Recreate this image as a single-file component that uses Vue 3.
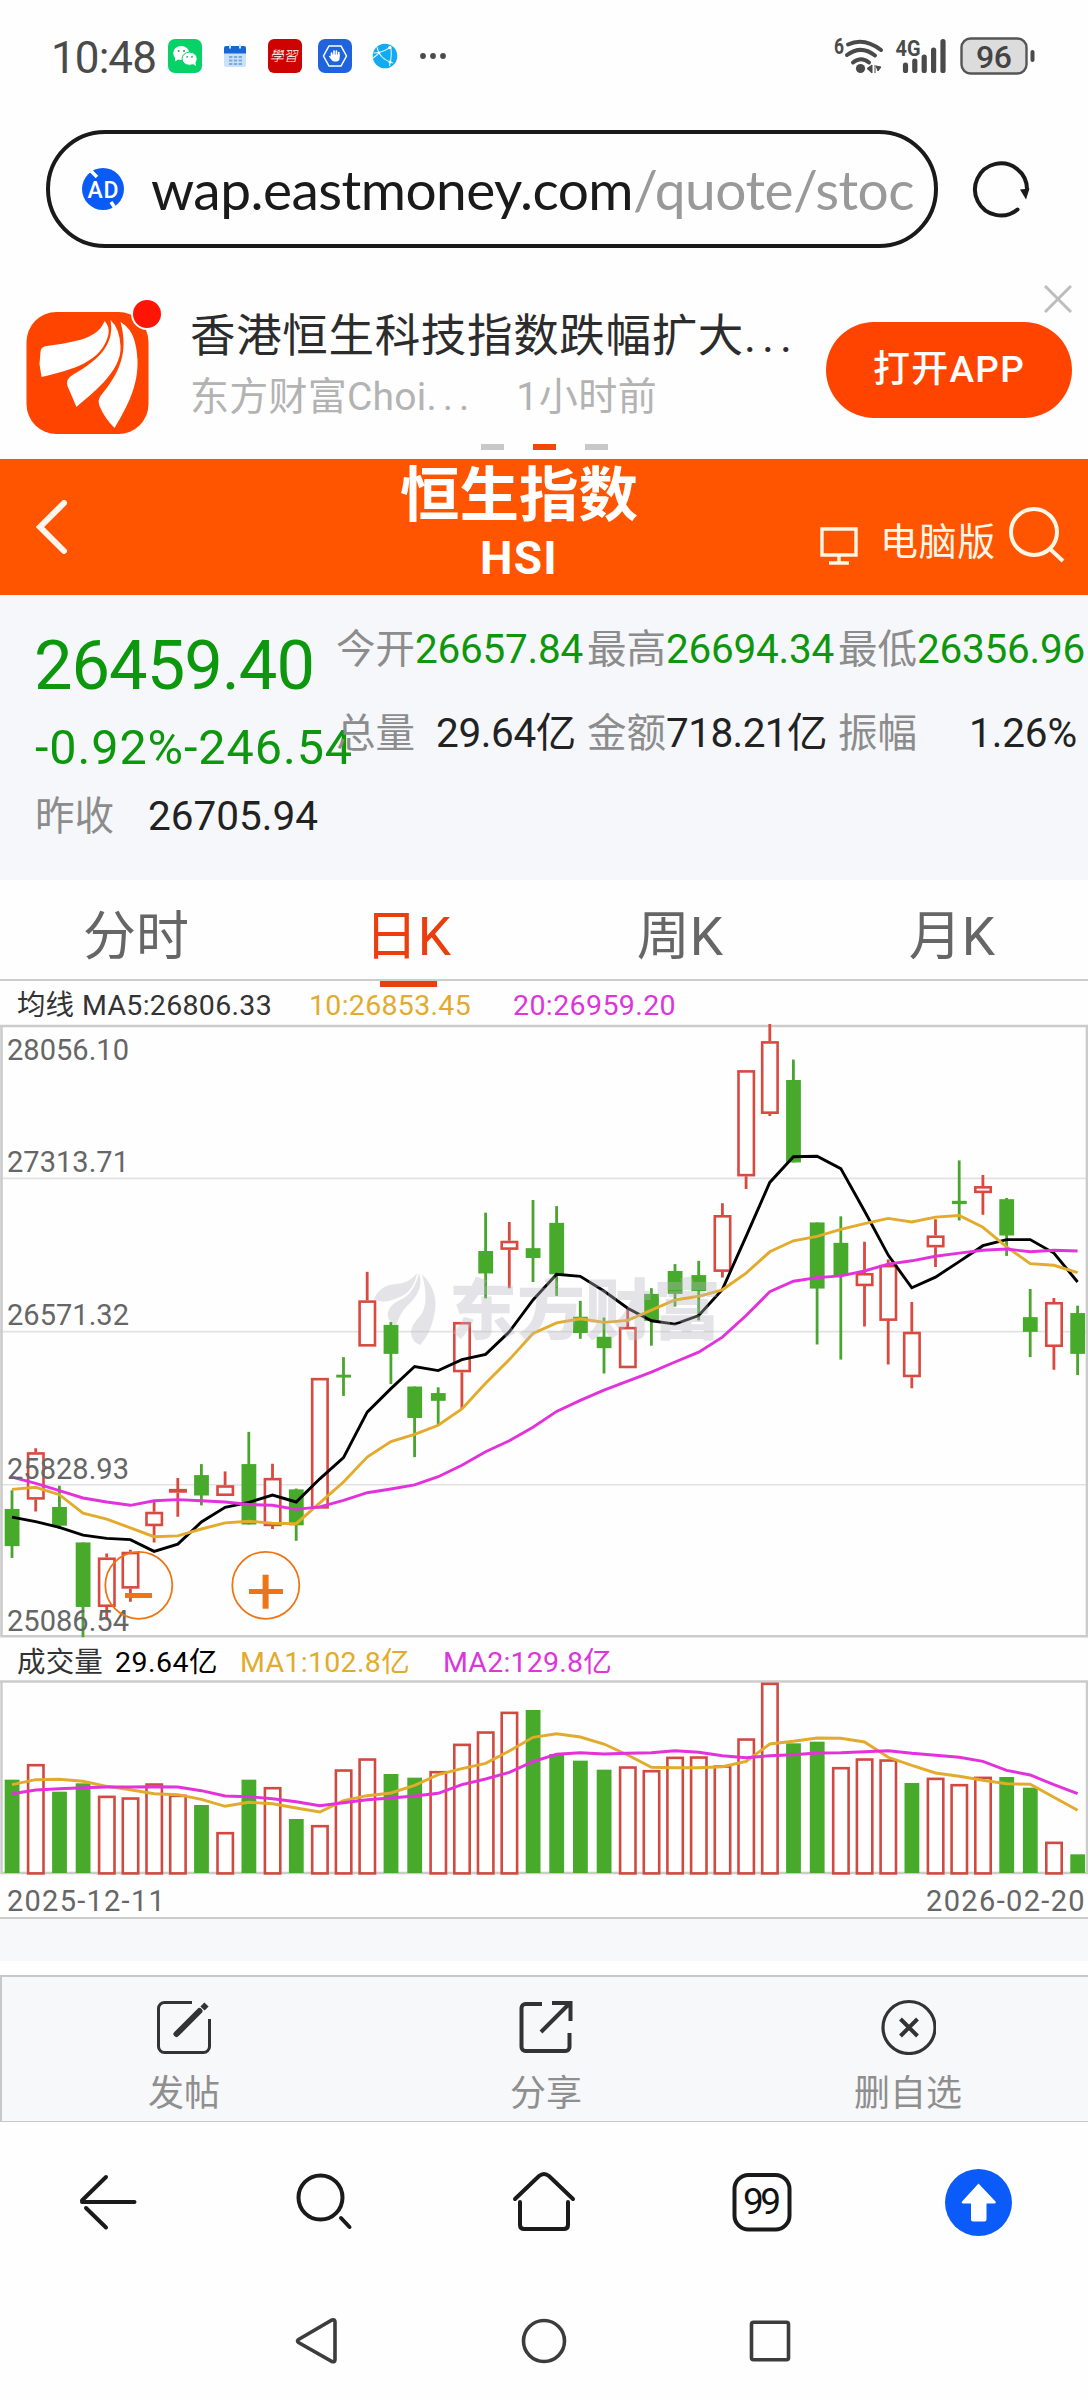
<template>
  <div class="page">
    <!-- 系统状态栏 -->
    <div class="status">
      <span v-fit="105" class="clock">10:48</span>
      <div class="status-apps">
        <svg class="app-ico" viewBox="0 0 34 34">
          <rect width="34" height="34" rx="7" fill="#07d268" />
          <ellipse cx="13.2" cy="14" rx="8" ry="7" fill="#fff" />
          <path d="M7 18l0 4.5 4-2.4z" fill="#fff" />
          <ellipse cx="21.6" cy="19.7" rx="7.6" ry="6.6" fill="#fff" stroke="#07d268" stroke-width="1" />
          <path d="M25 25l3 2-.6-4z" fill="#fff" />
          <g fill="#07b45c">
            <circle cx="10.6" cy="12" r="1" /><circle cx="16" cy="12" r="1" />
            <circle cx="19.2" cy="17.8" r=".9" /><circle cx="24" cy="17.8" r=".9" />
          </g>
        </svg>
        <svg class="app-ico" viewBox="0 0 34 34">
          <rect x="6" y="8" width="22" height="20" rx="2" fill="#c9e2fb" />
          <path d="M6 14.5V9a2 2 0 0 1 2-2h18a2 2 0 0 1 2 2v5.500z" fill="#1766d8" />
          <path d="M12 5.500v4M22 5.500v4" stroke="#cfe4fb" stroke-width="2" />
          <path d="M11 18h13M11 21.500h13M11 25h13" stroke="#7fa9dc" stroke-width="2.200" stroke-dasharray="3.400 1.400" />
        </svg>
        <svg class="app-ico" viewBox="0 0 34 34">
          <rect width="34" height="34" rx="6" fill="#cf0202" />
          <text class="xuexi" x="17" y="22.500" text-anchor="middle" transform="skewX(-10) translate(3 0)">學習</text>
        </svg>
        <svg class="app-ico" viewBox="0 0 34 34">
          <rect width="34" height="34" rx="7" fill="#2064dd" />
          <path d="M11 7h12l5.500 10L23 27H11L5.500 17z" fill="none" stroke="#fff" stroke-width="1.500" />
          <path d="M13.600 17v-3M16 17v-5M18.400 17v-5M20.800 17v-3.500" stroke="#fff" stroke-width="1.700" stroke-linecap="round" />
          <path d="M12.800 15.500h8.800v3.500q0 3.500-3.500 3.500h-1.600q-2 0-3.500-2.200l-2.200-3 1-.6 1 .8z" fill="#fff" />
        </svg>
        <svg class="app-ico" viewBox="0 0 34 34">
          <circle cx="17" cy="17" r="12.300" fill="#12aaf0" />
          <path d="M5.500 14q9 0 17-6M9 8q2 12 16 16M22.500 7q2 8-1 20M5 19q4-3 5-4" fill="none" stroke="#d6f2ff" stroke-width="1.100" />
          <circle cx="11" cy="14" r="1.300" fill="#fff" /><circle cx="21.800" cy="8.600" r="1.600" fill="#fff" />
          <circle cx="22" cy="23" r="1.500" fill="#fff" />
        </svg>
      </div>
      <svg class="more" viewBox="0 0 28 8">
        <g fill="#4a4a4a"><circle cx="4" cy="4" r="2.900" /><circle cx="14" cy="4" r="2.900" /><circle cx="24" cy="4" r="2.900" /></g>
      </svg>
      <svg class="signals" viewBox="832 34 206 44">
        <g fill="none" stroke="#4a4a4a" stroke-linecap="round">
          <path d="M847 44.500q16-7.500 33 5.500" stroke-width="4" />
          <path d="M846 55q14-10.500 28 .5" stroke-width="4" />
          <path d="M852 62.500q8-6.500 16 0" stroke-width="4" />
        </g>
        <circle cx="859.500" cy="68.500" r="4.600" fill="#4a4a4a" />
        <path d="M866 68.500l5-3.500v8zM874 65v8M875 66l5 1-3 4z" fill="#4a4a4a" stroke="#4a4a4a" />
        <text x="833" y="54" class="tiny" textLength="10" lengthAdjust="spacingAndGlyphs">6</text>
        <text x="894.500" y="55.500" class="tiny" textLength="25" lengthAdjust="spacingAndGlyphs">4G</text>
        <path
          d="M904.500 65v5.500M913.800 61v9.500M923.200 57v13.500M932.600 50v20.500M942 41.500v29"
          stroke="#4a4a4a" stroke-width="5.200" stroke-linecap="round"
        />
        <rect x="960.500" y="38.500" width="65" height="35" rx="9" fill="#dcdcdc" stroke="#555" stroke-width="2.400" />
        <rect x="1029.500" y="50" width="4" height="12" rx="2" fill="#4a4a4a" />
        <text x="993" y="68" class="battery" text-anchor="middle" textLength="36">96</text>
      </svg>
    </div>

    <!-- 浏览器地址栏 -->
    <div class="address">
      <div class="address-box">
        <svg class="ad" viewBox="0 0 42 42">
          <circle cx="21" cy="21" r="21" fill="#0a5bf5" />
          <path d="M9 3l6 6M29 34l4 6" stroke="#fff" stroke-width="3.500" />
          <text x="21" y="29.500" text-anchor="middle" textLength="31">AD</text>
        </svg>
        <span v-fit="763" class="url">wap.eastmoney.com<i>/quote/stoc</i></span>
      </div>
      <svg class="reload" viewBox="0 0 60 60">
        <path d="M46.500 50.500A26 26 0 1 1 56 30" fill="none" stroke="#1a1a1a" stroke-width="4" stroke-linecap="round" />
        <path d="M49 30.500L58.500 29.500 55 40.500z" fill="#1a1a1a" />
      </svg>
    </div>

    <!-- APP 推广条 -->
    <div class="promo">
      <div class="logo">
        <svg viewBox="0 0 122 122">
          <rect width="122" height="122" rx="30" fill="#ff4400" />
          <path v-for="d in feathers" :key="d" :d="d" fill="#fff" />
        </svg>
        <b class="badge"></b>
      </div>
      <div class="news">
        <p v-fit="610" class="news-title">香港恒生科技指数跌幅扩大<span class="ell">...</span></p>
        <p class="news-sub">
          <span v-fit="286">东方财富Choi<span class="ell">...</span></span>
          <span v-fit="141">1小时前</span>
        </p>
      </div>
      <div class="promo-side">
        <svg class="close" viewBox="0 0 28 28"><path d="M1 1l26 26M27 1L1 27" stroke="#bdbdbd" stroke-width="3" /></svg>
        <button class="open-app"><span v-fit="152">打开APP</span></button>
      </div>
      <div class="pager"><i></i><i class="on"></i><i></i></div>
    </div>

    <!-- 标题栏 -->
    <header class="title-bar">
      <svg class="back" viewBox="0 0 32 54"><path d="M28 3L4 27l24 24" /></svg>
      <div class="title">
        <h1>恒生指数</h1>
        <h2 v-fit="78">HSI</h2>
      </div>
      <div class="title-actions">
        <svg class="monitor" viewBox="0 0 38 38">
          <path d="M2 2h34v26H2zM19 28v7M9 36h20" fill="none" stroke="#fff6e8" stroke-width="3.400" />
        </svg>
        <span v-fit="116">电脑版</span>
        <svg class="find" viewBox="0 0 56 56">
          <circle cx="25" cy="25" r="23" /><path d="M41 42l13 12" />
        </svg>
      </div>
    </header>

    <!-- 行情摘要 -->
    <section class="quote">
      <div class="quote-main">
        <div class="price"><span v-fit="280">26459.40</span></div>
        <div class="change"><span v-fit="318">-0.92%-246.54</span></div>
        <div class="prev"><label>昨收</label><span v-fit="170">26705.94</span></div>
      </div>
      <div class="quote-grid">
        <div v-for="q in quotes" :key="q.label" class="cell" :class="{ end: !q.down }">
          <label>{{ q.label }}</label>
          <span v-fit="q.w" :class="{ down: q.down }">{{ q.value }}</span>
        </div>
      </div>
    </section>

    <nav class="tabs">
      <a v-for="t in tabs" :key="t" :class="{ active: t === current }" @click="current = t">{{ t }}</a>
    </nav>

    <!-- K 线 -->
    <div class="legend legend-ma">
      <span v-fit="57">均线</span>
      <span v-fit="190">MA5:26806.33</span>
      <span v-fit="162" class="y">10:26853.45</span>
      <span v-fit="163" class="m">20:26959.20</span>
    </div>
    <svg class="kline" viewBox="0 0 1088 620">
      <path d="M0 158.400H1088M0 311.600H1088M0 464.700H1088" stroke="#e2e2e2" stroke-width="1.600" />
      <path d="M0 6H1087V616.300H1.500V6" fill="none" stroke="#cbcbcb" stroke-width="2.600" />
      <g v-for="c in candles" :key="c.x">
        <template v-if="c.up">
          <path :d="`M${c.x} ${c.hi}V${c.top}M${c.x} ${c.bot}V${c.lo}`" stroke="#d9493f" stroke-width="2.800" />
          <rect :x="c.x - 7.600" :y="c.top + 1.200" width="15.400" :height="Math.max(c.bot - c.top - 2.400, 1)" fill="#fff" stroke="#d9493f" stroke-width="2.600" />
        </template>
        <template v-else>
          <path :d="`M${c.x} ${c.hi}V${c.lo}`" stroke="#4aa52f" stroke-width="2.800" />
          <rect :x="c.x - 7.300" :y="c.top" width="14.800" :height="c.bot - c.top" fill="#47aa2b" />
        </template>
      </g>
      <polyline :points="line(ma5, 2.45)" class="ln k" />
      <polyline :points="line(ma10, 2.45)" class="ln y" />
      <polyline :points="line(ma20, 2.45)" class="ln m" />
      <!-- 水印 -->
      <g class="mark">
        <path d="M374 279Q380 265 396 264Q410 263 417 253Q414 273 395 279Q382 284 374 279z" />
        <path d="M419 253Q425 270 407 286Q400 293 396 306Q389 302 388 297Q386 286 402 279Q414 273 419 253z" />
        <path d="M422 254Q440 272 434 296Q430 315 420 325Q412 322 411 313Q411 305 420 296Q430 284 422 254z" />
        <text x="449" y="314" textLength="272" lengthAdjust="spacingAndGlyphs">东方财富</text>
      </g>
      <text v-for="l in axis" :key="l.y" x="7" :y="l.y" class="axis" textLength="122">{{ l.t }}</text>
      <g class="zoom-btn">
        <circle cx="138.800" cy="565.300" r="33.500" />
        <path d="M125 575.500h27" stroke-width="5" />
        <circle cx="265.800" cy="565.300" r="33.500" />
        <path d="M249 571.500h34" stroke-width="5" />
        <path d="M265.600 554.700v34" stroke-width="6" />
      </g>
    </svg>

    <!-- 成交量 -->
    <div class="legend legend-vol">
      <span v-fit="86">成交量</span>
      <span v-fit="103" class="k">29.64亿</span>
      <span v-fit="170" class="y">MA1:102.8亿</span>
      <span v-fit="169" class="m">MA2:129.8亿</span>
    </div>
    <svg class="volume" viewBox="0 40 1088 196">
      <path d="M0 41.500H1087V233H1.500V41.500" fill="none" stroke="#cbcbcb" stroke-width="2.400" />
      <template v-for="v in volumes" :key="v.x">
        <rect v-if="v.down" :x="v.x - 7.300" :y="v.y" width="14.800" :height="233 - v.y" fill="#47aa2b" />
        <rect v-else :x="v.x - 7.600" :y="v.y + 1.200" width="15.400" :height="232.200 - v.y" fill="#fff" stroke="#d04a42" stroke-width="2.600" />
      </template>
      <polyline :points="line(vma1, 3)" class="ln y" />
      <polyline :points="line(vma2, 3)" class="ln m" />
    </svg>
    <div class="dates"><span v-fit="159">2025-12-11</span><span v-fit="160">2026-02-20</span></div>
    <div class="band"></div>

    <!-- 页面工具栏 -->
    <div class="tools">
      <div class="tool">
        <svg viewBox="0 0 56 56">
          <path d="M36 3.500H8.500a6 6 0 0 0-6 6v38a6 6 0 0 0 6 6h39a6 6 0 0 0 6-6V20" stroke-width="3" />
          <path d="M20.500 35L43.500 12" stroke-width="6" stroke-linecap="round" /><path d="M46.500 9.500l4-4" stroke-width="6" />
        </svg>
        <span>发帖</span>
      </div>
      <div class="tool">
        <svg viewBox="0 0 56 56">
          <path d="M24 5H7.500a4 4 0 0 0-4 4v39a4 4 0 0 0 4 4h40a4 4 0 0 0 4-4V34" stroke-width="4" />
          <path d="M23 33L51 5M34 4h18.500v18" stroke-width="4" />
        </svg>
        <span>分享</span>
      </div>
      <div class="tool">
        <svg viewBox="0 0 56 56">
          <circle cx="29" cy="28.500" r="26" stroke-width="3.200" />
          <path d="M20.500 20l17 17M37.500 20l-17 17" stroke-width="4" />
        </svg>
        <span>删自选</span>
      </div>
    </div>

    <!-- 浏览器底栏 -->
    <div class="browser">
      <svg viewBox="0 0 68 68"><path d="M7 34h52.500M7 32.500l24-23.500M11 40l20 19.500" /></svg>
      <svg viewBox="0 0 68 68"><circle cx="28.500" cy="29.500" r="22" /><path d="M49 50l8.500 9" /></svg>
      <svg viewBox="0 0 68 68">
        <path d="M5 31L29 8q5-4 10 0l24 23M10 34v23q0 4 4.500 4h39q4.500 0 4.500-4V34" />
      </svg>
      <svg viewBox="0 0 68 68">
        <rect x="6.500" y="7" width="55" height="54.500" rx="14" />
        <text x="34" y="46" text-anchor="middle" textLength="38">99</text>
      </svg>
      <svg viewBox="0 0 68 68" class="up">
        <circle cx="33.500" cy="34.500" r="33.500" />
        <path d="M33.500 15.500L50 33q2 2.500-1 2.500h-7.500v16q0 2-2 2H28q-2 0-2-2v-16h-7.500q-3 0-1-2.500z" />
      </svg>
    </div>

    <div class="sysnav">
      <svg viewBox="0 0 50 50"><path d="M5.500 23.500L39 4q3-1 3 2v37.500q0 3-3 2L5.500 26.500q-2-1.500 0-3z" /></svg>
      <svg viewBox="0 0 50 50"><circle cx="25" cy="25" r="20.500" /></svg>
      <svg viewBox="0 0 50 50"><rect x="6.500" y="6.300" width="37" height="37.500" rx="2" /></svg>
    </div>
  </div>
</template>

<script setup>
import { ref } from 'vue'

const vFit = {
  mounted(el, { value }) {
    const n = el.textContent.length
    const natural = el.getBoundingClientRect().width
    el.style.letterSpacing = `${((value - natural) / n).toFixed(3)}px`
  }
}

const feathers = [
  'M78 9C72 26 50 30 20 34Q14 35 14 40L13 52L15 65C45 58 76 50 82 22Q83 14 78 9Z',
  'M84 8C88 30 76 46 46 63Q39 67 41 74L50 95C62 84 96 60 94 34Q93 16 84 8Z',
  'M94 10C102 40 94 60 74 84Q71 88 73 94Q78 106 88 116C100 96 112 74 111 48C110 26 104 16 94 10Z'
]

const quotes = [
  { label: '今开', value: '26657.84', w: 168, down: true },
  { label: '最高', value: '26694.34', w: 168, down: true },
  { label: '最低', value: '26356.96', w: 168, down: true },
  { label: '总量', value: '29.64亿', w: 140 },
  { label: '金额', value: '718.21亿', w: 161 },
  { label: '振幅', value: '1.26%', w: 108 }
]

const tabs = ['分时', '日K', '周K', '月K']
const current = ref('日K')

const axis = [
  { y: 39.6, t: '28056.10' },
  { y: 152.2, t: '27313.71' },
  { y: 305.3, t: '26571.32' },
  { y: 458.8, t: '25828.93' },
  { y: 611.4, t: '25086.54' }
]

const px = i => +(12 + i * 23.68).toFixed(1)
const line = (list, k) => list.map((v, i) => `${px(i)},${(v / k).toFixed(1)}`).join(' ')

// [最高, 实体上沿, 实体下沿, 最低, 1 涨 / 0 跌]
const rows = [
  [1152, 1198, 1289, 1318, 0], [1049, 1059, 1175, 1204, 1], [1141, 1193, 1239, 1247, 0],
  [1280, 1280, 1438, 1512, 0], [1307, 1317, 1438, 1466, 1], [1298, 1303, 1393, 1425, 1],
  [1178, 1205, 1240, 1280, 1], [1122, 1149, 1158, 1217, 1], [1088, 1115, 1165, 1189, 0],
  [1106, 1140, 1166, 1166, 1], [1009, 1088, 1236, 1236, 0], [1087, 1122, 1240, 1247, 1],
  [1148, 1150, 1238, 1276, 0], [877, 877, 1197, 1197, 1], [826, 869, 876, 921, 0],
  [617, 687, 800, 800, 1], [740, 747, 818, 892, 0], [898, 898, 975, 1071, 0],
  [900, 914, 933, 992, 0], [740, 740, 863, 953, 1], [472, 566, 621, 682, 0],
  [495, 541, 563, 657, 1], [441, 559, 583, 642, 0], [456, 497, 623, 676, 0],
  [688, 727, 767, 781, 0], [729, 776, 804, 866, 0], [705, 752, 853, 853, 1],
  [657, 671, 737, 798, 0], [598, 615, 671, 702, 0], [590, 625, 664, 736, 0],
  [449, 478, 617, 631, 1], [123, 123, 383, 414, 1], [10, 52, 230, 235, 1],
  [97, 147, 349, 349, 0], [496, 496, 658, 795, 0], [481, 546, 626, 832, 0],
  [543, 620, 652, 751, 1], [587, 600, 737, 844, 1], [691, 764, 875, 902, 1],
  [488, 528, 557, 605, 1], [344, 443, 451, 491, 0], [380, 407, 424, 477, 1],
  [436, 439, 528, 578, 0], [659, 728, 764, 826, 0], [681, 691, 801, 857, 1],
  [700, 718, 818, 870, 0]
]
const candles = rows.map(([hi, top, bot, lo, up], i) => ({
  x: px(i), hi: hi / 2.45, top: top / 2.45, bot: bot / 2.45, lo: lo / 2.45, up
}))

const ma5 = [
  1218, 1229, 1243, 1262, 1270, 1273, 1302, 1284, 1230, 1194, 1182, 1164, 1181, 1124, 1072, 961,
  903, 849, 859, 832, 819, 764, 686, 623, 628, 664, 706, 737, 745, 724, 660, 530, 398, 335, 334,
  364, 468, 576, 656, 630, 592, 553, 538, 538, 571, 642
]
const ma10 = [
  1150, 1145, 1163, 1208, 1223, 1244, 1266, 1264, 1247, 1232, 1228, 1233, 1234, 1183, 1132, 1071,
  1033, 1015, 993, 953, 890, 832, 768, 742, 732, 741, 736, 711, 686, 677, 661, 620, 568, 541, 530,
  513, 499, 486, 495, 483, 479, 508, 556, 597, 601, 619
]
const ma20 = [
  1120, 1135, 1153, 1171, 1181, 1189, 1178, 1175, 1178, 1181, 1187, 1189, 1199, 1193, 1177, 1158,
  1149, 1139, 1119, 1091, 1058, 1031, 998, 959, 932, 907, 885, 863, 838, 814, 777, 724, 666, 640,
  631, 627, 615, 598, 590, 579, 571, 564, 561, 568, 564, 566
]

const volTops = [
  419, 372, 455, 430, 467, 472, 430, 464, 495, 576, 419, 441, 537, 555, 388, 355, 402, 413, 393,
  311, 274, 215, 210, 342, 362, 389, 379, 390, 350, 349, 376, 295, 128, 310, 305, 381, 355, 358,
  429, 413, 432, 410, 411, 443, 605, 643
]
const volDown = [0, 2, 3, 8, 10, 12, 16, 17, 22, 23, 24, 25, 33, 34, 38, 42, 43, 45]
const volumes = volTops.map((t, i) => ({ x: px(i), y: t / 3, down: volDown.includes(i) }))

const vma1 = [
  434, 419, 418, 424, 439, 449, 461, 464, 478, 499, 487, 491, 504, 516, 482, 467, 459, 436, 404,
  386, 370, 333, 292, 281, 291, 312, 345, 382, 383, 383, 380, 364, 312, 304, 294, 295, 306, 352,
  376, 399, 409, 421, 431, 433, 472, 511
]
const vma2 = [
  461, 450, 446, 443, 441, 441, 440, 441, 452, 468, 470, 476, 485, 497, 488, 479, 474, 468, 460,
  434, 417, 397, 365, 343, 338, 342, 340, 338, 332, 337, 347, 353, 347, 344, 339, 338, 335, 332,
  340, 346, 352, 364, 391, 405, 434, 461
]
</script>

<style>
body{ background:#fefefe; }
</style>

<style scoped>
.page{
  width:1088px; height:2400px; overflow:hidden;
  background:#fefefe; color:#222;
  font-family:Roboto, "Noto Sans CJK SC", sans-serif;
}
.page *{ box-sizing:border-box; }
svg{ display:block; flex:none; }
span, label{ white-space:nowrap; }
p, h1, h2{ margin:0; }

/* 状态栏 */
.status{
  display:flex; align-items:center;
  height:112px; padding-left:51px;
}
.clock{ font-size:44px; line-height:60px; color:#4a4a4a; margin-top:3px; }
.status-apps{ display:flex; gap:16px; margin-left:12px; }
.app-ico{ width:34px; height:34px; }
.xuexi{ font:300 14px "Noto Sans CJK TC", sans-serif; fill:#fff; }
.more{ width:28px; height:8px; margin-left:17px; }
.signals{ width:206px; height:44px; margin-left:386px; }
.tiny{ font:bold 22px Roboto, sans-serif; fill:#4a4a4a; }
.battery{ font:500 32px Roboto, sans-serif; fill:#444; }

/* 地址栏 */
.address{ display:flex; align-items:center; height:154px; padding-left:46px; }
.address-box{
  display:flex; align-items:center;
  width:892px; height:118px; padding-left:32px;
  border:4px solid #1a1a1a; border-radius:59px;
}
.ad{ width:42px; height:42px; }
.ad text{ font:500 23px Roboto, sans-serif; fill:#fff; }
.url{
  margin-left:27px; font:55px/70px Lato, sans-serif; color:#1a1a1a;
}
.url i{ font-style:normal; color:#999; }
.reload{ width:60px; height:60px; margin-left:33px; }

/* 推广条 */
.promo{
  display:grid; grid-template-columns:166px 634px 1fr; grid-template-rows:178px 15px;
  height:193px;
}
.logo{ position:relative; width:123px; height:122px; margin:46px 0 0 26px; }
.logo svg{ width:123px; height:122px; }
.badge{
  position:absolute; right:-14px; top:-14px;
  width:32px; height:32px; border-radius:50%;
  background:#ff1506; border:2px solid #fefefe;
}
.news{ padding:39px 0 0 24px; }
.news-title{ width:max-content; font-size:45.5px; line-height:63px; color:#2c2c2c; }
.news-sub{ display:flex; gap:41px; font-size:39px; line-height:58px; color:#b3b3b3; }
.ell{ letter-spacing:6px; }
.promo-side{ display:flex; flex-direction:column; align-items:flex-end; padding:19px 16px 0 0; }
.close{ width:28px; height:28px; }
.open-app{
  width:246px; height:96px; margin-top:9px; padding:0;
  border:0; border-radius:48px; background:#ff4400; color:#fff;
  font:500 37px/60px Roboto, "Noto Sans CJK SC", sans-serif;
}
.pager{ grid-column:1 / 4; display:flex; justify-content:center; gap:29px; }
.pager i{ width:23px; height:6px; background:#c8c8c8; }
.pager .on{ background:#f04806; }

/* 标题栏 */
.title-bar{
  display:grid; grid-template-columns:300px 438px 1fr;
  height:136px; background:#ff5500; color:#fff;
}
.back{ width:32px; height:54px; margin:41px 0 0 36px; fill:none; stroke:#fff6ee; stroke-width:6; stroke-linecap:round; }
.title{ text-align:center; }
.title h1{ font-size:59.5px; line-height:75px; font-weight:bold; }
.title h2{ width:max-content; margin:-1px auto 0; font:bold 46px/50px Roboto, sans-serif; }
.title-actions{ display:flex; padding-left:82px; font-size:38px; color:#fff6e8; }
.monitor{ width:38px; height:38px; margin-top:68px; }
.title-actions span{ margin:52px 0 0 22px; line-height:62px; height:62px; }
.find{ width:56px; height:56px; margin:48px 0 0 13px; fill:none; stroke:#fff6e8; stroke-width:4; }

/* 行情 */
.quote{ display:flex; height:285px; background:#f5f7fa; }
.quote label{ color:#8c8c8c; flex:none; }
.quote-main{ flex:none; width:336px; padding:26px 0 0 37px; color:#0d970d; white-space:nowrap; }
.price{ font-size:68.6px; line-height:90px; margin-left:-3px; }
.change{ font-size:48.5px; line-height:73px; margin-left:-2px; }
.prev{ font-size:40.5px; line-height:65px; display:flex; }
.prev label{ width:113px; margin-left:-2px; font-size:39.5px; }
.prev span{ color:#222; }
.quote-grid{
  display:grid; grid-template-columns:251px 251px 250px; grid-template-rows:83.5px 83.5px;
  padding-top:13px; flex:none;
}
.cell{ display:flex; font-size:40.5px; line-height:83.5px; }
.cell label{ width:79px; font-size:39.5px; }
.cell.end{ justify-content:space-between; padding-right:11px; }
.down{ color:#0d970d; }

/* 周期切换 */
.tabs{
  display:grid; grid-template-columns:repeat(4, 1fr);
  height:101px; border-bottom:2px solid #ccc;
  font-size:53px; line-height:114px; color:#666; text-align:center;
}
.tabs a{ position:relative; }
.tabs .active{ color:#ea3e0d; }
.tabs .active::after{
  content:""; position:absolute; left:108px; top:101px;
  width:57px; height:6px; background:#ea3e0d;
}

.legend{ display:flex; align-items:center; padding-left:17px; font-size:28.5px; line-height:28px; color:#333; }
.legend-ma{ height:39px; padding-top:11px; }
.legend-ma span:nth-child(2){ margin-left:8px; }
.legend-ma span:nth-child(3){ margin-left:37px; }
.legend-ma span:nth-child(4){ margin-left:42px; }
.legend-vol{ height:40px; padding-top:5px; }
.legend-vol span:nth-child(2){ margin-left:12px; }
.legend-vol span:nth-child(3){ margin-left:22px; }
.legend-vol span:nth-child(4){ margin-left:33px; }
.legend .k{ color:#000; }
.legend .y{ color:#e3ab2c; }
.legend .m{ color:#dc35dc; }

.kline{ width:1088px; height:620px; }
.volume{ width:1088px; height:196px; }
.ln{ fill:none; stroke-width:2.9; }
.ln.k{ stroke:#000; }
.ln.y{ stroke:#e3ab2c; }
.ln.m{ stroke:#e331dc; }
.axis{ font-size:29px; fill:#666; }
.mark{ fill:#b9b9c2; opacity:.36; }
.mark text{ font:900 66px "Noto Sans CJK SC", sans-serif; }
.zoom-btn{ fill:none; stroke:#ee7414; stroke-width:1.8; }

.dates{
  display:flex; justify-content:space-between;
  height:43px; padding:11px 2px 0 7px; border-bottom:2px solid #ccc;
  font-size:29px; line-height:28px; color:#666;
}
.band{ height:42px; background:#f7f8fa; margin-bottom:14px; }

/* 工具栏 */
.tools{
  display:grid; grid-template-columns:repeat(3, 1fr);
  height:147px; background:#f7f8fa;
  border:solid #c8c8c8; border-width:2px 0 1px 2px;
}
.tool{ display:flex; flex-direction:column; align-items:center; padding:22px 0 0 2px; font-size:36px; line-height:70px; color:#8f8f8f; }
.tool svg{ width:56px; height:56px; fill:none; stroke:#333; }
.tool span{ margin-top:4px; }

.browser{ display:grid; grid-template-columns:repeat(5, 1fr); height:160px; align-items:center; justify-items:center; }
.browser svg{ width:68px; height:68px; fill:none; stroke:#1a1a1a; stroke-width:4; stroke-linecap:round; }
.browser text{ font:37px Roboto, sans-serif; fill:#111; stroke:none; }
.browser .up circle{ fill:#0a5bfa; stroke:none; }
.browser .up path{ fill:#fff; stroke:none; }

.sysnav{ display:flex; justify-content:center; align-items:center; gap:176px; height:118px; }
.sysnav svg{ width:50px; height:50px; fill:none; stroke:#3c3c3c; stroke-width:3.6; }
</style>
